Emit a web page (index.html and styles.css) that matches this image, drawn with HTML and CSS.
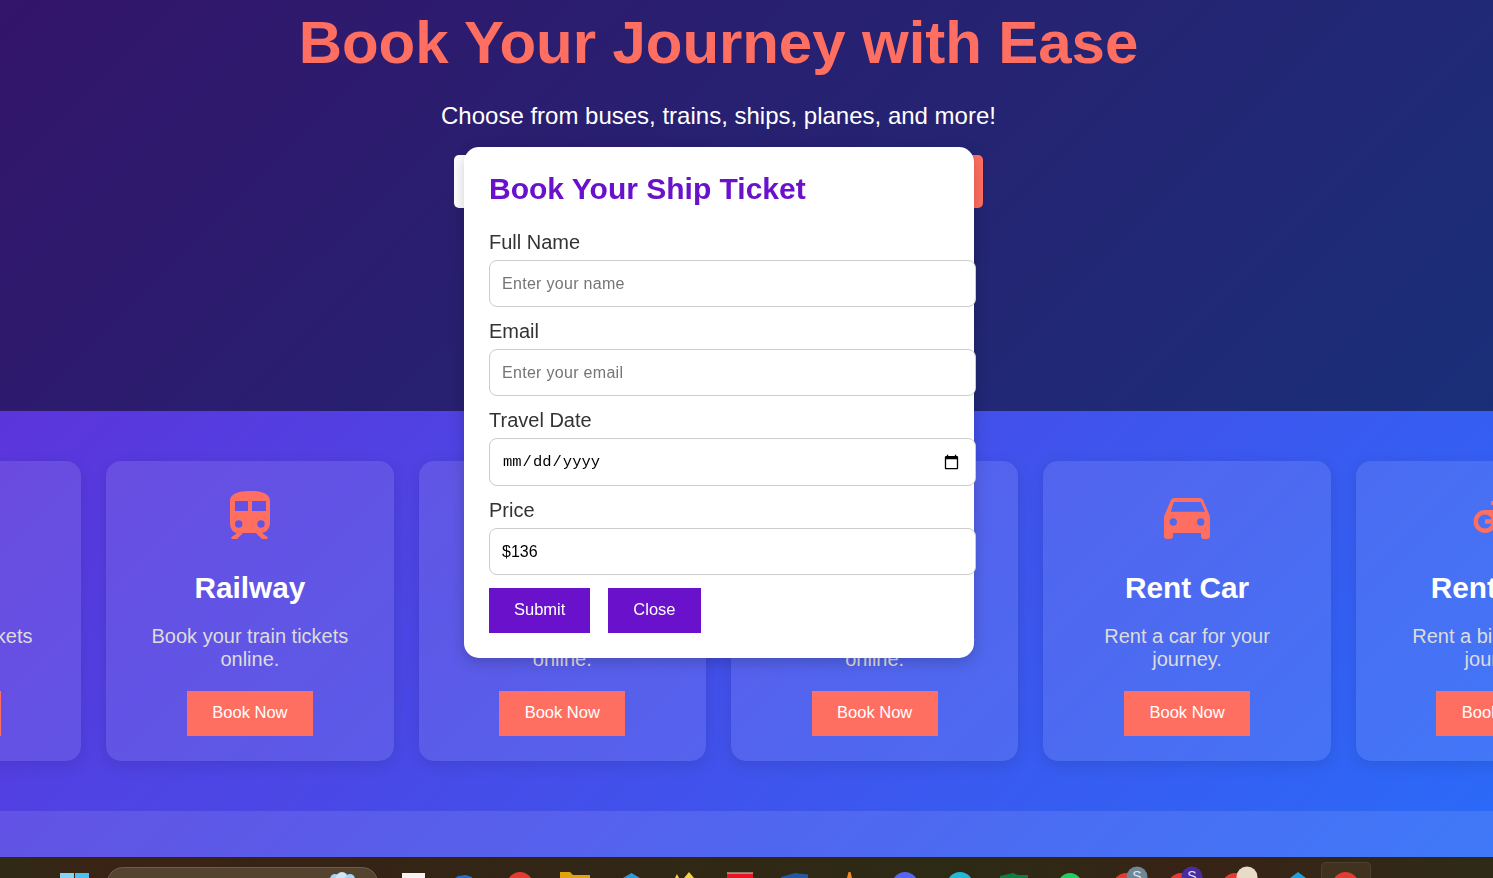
FILE: index.html
```html
<!DOCTYPE html>
<html lang="en">
<head>
<meta charset="utf-8">
<title>Book Your Journey with Ease</title>
<link rel="stylesheet" href="styles.css">
</head>
<body>
<div class="page">
  <section class="hero">
    <h1 class="hero-title">Book Your Journey with Ease</h1>
    <p class="hero-sub">Choose from buses, trains, ships, planes, and more!</p>
    <form class="search">
      <input class="search-input" type="text">
      <button class="search-btn" type="button">Search</button>
    </form>
  </section>
  <section class="services">
    <div class="track">
      <article class="card">
        <div class="card-icon"></div>
        <h3>Bus</h3>
        <p>Book your bus tickets online.</p>
        <button class="book" type="button">Book Now</button>
      </article>
      <article class="card">
        <div class="card-icon">
          <svg class="icon" width="40" height="48" viewBox="0 0 40 48"><path fill="#ff6f61" fill-rule="evenodd" d="M0 10C0 3 8 0 20 0s20 3 20 10v22c0 5-3 9-8 10l6 4.500-1 1.500h-5l-6-6H13l-6 6H2l-1-1.500 6-4.500c-5-1-7-5-7-10zM5 10v10h13V10zM22 10v10h14V10zM8.700 29.300a3.700 3.700 0 1 0 0 7.400 3.700 3.700 0 0 0 0-7.400zM31 29.300a3.700 3.700 0 1 0 0 7.400 3.700 3.700 0 0 0 0-7.400z"/></svg>
        </div>
        <h3>Railway</h3>
        <p>Book your train tickets online.</p>
        <button class="book" type="button">Book Now</button>
      </article>
      <article class="card">
        <div class="card-icon"></div>
        <h3>Ship</h3>
        <p>Book your ship tickets online.</p>
        <button class="book" type="button">Book Now</button>
      </article>
      <article class="card">
        <div class="card-icon"></div>
        <h3>Flight</h3>
        <p>Book your flight tickets online.</p>
        <button class="book" type="button">Book Now</button>
      </article>
      <article class="card">
        <div class="card-icon">
          <svg class="icon" width="46" height="41" viewBox="0 0 46 41"><path fill="#ff6f61" fill-rule="evenodd" d="M6.500 3C7 1 8.500 0 10.500 0h25c2 0 3.500 1 4 3L45 16c.5 1 1 2 1 4v18c0 2-1 3-3 3h-3c-2 0-3-1-3-3v-3H9v3c0 2-1 3-3 3H3c-2 0-3-1-3-3V20c0-2 .5-3 1-4zM10 4L6.700 13.700H41L36.700 4zM9.300 20.300a3.700 3.700 0 1 0 0 7.400 3.700 3.700 0 0 0 0-7.400zM36.700 20.300a3.700 3.700 0 1 0 0 7.400 3.700 3.700 0 0 0 0-7.400z"/></svg>
        </div>
        <h3>Rent Car</h3>
        <p>Rent a car for your journey.</p>
        <button class="book" type="button">Book Now</button>
      </article>
      <article class="card">
        <div class="card-icon">
          <svg class="icon" width="58" height="48" viewBox="0 0 58 48"><path fill="none" stroke="#ff6f61" stroke-width="4.500" d="M15 21.300a9.200 9.200 0 1 0 0 18.400 9.200 9.200 0 0 0 0-18.400zM15 30.500h20M15 21.300h22"/><path fill="#ff6f61" d="M21 10h8v4h-8z"/></svg>
        </div>
        <h3>Rent Bike</h3>
        <p>Rent a bike for your journey.</p>
        <button class="book" type="button">Book Now</button>
      </article>
    </div>
  </section>
  <footer class="footer"></footer>
</div>

<aside class="modal">
  <h2 class="modal-title">Book Your Ship Ticket</h2>
  <label class="field-label" for="name">Full Name</label>
  <input class="field" id="name" type="text" placeholder="Enter your name">
  <label class="field-label" for="email">Email</label>
  <input class="field" id="email" type="email" placeholder="Enter your email">
  <label class="field-label" for="date">Travel Date</label>
  <input class="field" id="date" type="date">
  <label class="field-label" for="price">Price</label>
  <input class="field" id="price" type="text" value="$136">
  <div class="modal-actions">
    <button class="modal-btn" type="button">Submit</button>
    <button class="modal-btn" type="button">Close</button>
  </div>
</aside>

<div class="taskbar">
  <svg class="taskbar-icons" width="1493" height="21" viewBox="0 0 1493 21">
    <rect x="60" y="16" width="14" height="5" fill="#7fd6f5"/><rect x="75" y="16" width="14" height="5" fill="#4cc2f1"/>
    <rect x="107.500" y="10.500" width="270" height="30" rx="15" fill="#54432f" stroke="#6d5d4a"/>
    <circle cx="335" cy="22" r="5" fill="#a9d4f5"/><circle cx="342" cy="21" r="6" fill="#cde6fa"/><circle cx="350" cy="22" r="5" fill="#a9d4f5"/>
    <rect x="402" y="16" width="23" height="5" fill="#f4f4f4"/>
    <path d="M455 21l3-2 8-1 6 2v1z" fill="#1f6fd0"/>
    <circle cx="520" cy="28" r="13" fill="#e23b30"/>
    <path d="M560 21v-6h10l3 3h17v3z" fill="#e0a30f"/>
    <path d="M631.500 16l8.500 5h-17z" fill="#2a9ae0"/>
    <path d="M689 15l5 6h-10zM675 21l2-4 2 4z" fill="#f5d33c"/>
    <rect x="727" y="16" width="26" height="5" fill="#e8141e"/><rect x="727" y="15.500" width="26" height="1" fill="#f2c9c9"/>
    <path d="M781 20l14-4 13 1.500v3.500h-27z" fill="#235a9e"/>
    <path d="M847 21l1.500-6h2l1.500 6z" fill="#f08a24"/>
    <circle cx="905" cy="28" r="13" fill="#5865f2"/>
    <circle cx="960" cy="28" r="13" fill="#24b8d8"/>
    <path d="M1000 21v-2l13-3 5 2h10v3z" fill="#137a41"/>
    <circle cx="1070" cy="28" r="12" fill="#1ed05e"/>
    <circle cx="1126" cy="29" r="13" fill="#e23b30"/><circle cx="1137" cy="20" r="10.500" fill="#6f8796"/><text class="badge-s" x="1137" y="24" fill="#dfe6ea">S</text>
    <circle cx="1181" cy="29" r="13" fill="#e23b30"/><circle cx="1192" cy="20" r="10.500" fill="#4a2ca0"/><text class="badge-s" x="1192" y="24" fill="#e4def5">S</text>
    <circle cx="1235" cy="29" r="13" fill="#e23b30"/><circle cx="1247" cy="20" r="10.500" fill="#e8dcc6"/>
    <path d="M1298 15l8 6h-16z" fill="#1d9fe0"/>
    <rect x="1321.500" y="5.500" width="49" height="30" rx="4" fill="#40321f" stroke="#4f4130"/>
    <circle cx="1345.500" cy="28" r="13" fill="#e23b30"/>
  </svg>
</div>
</body>
</html>
```

FILE: styles.css
```css
* {
  box-sizing: border-box;
}

html, body {
  height: 100%;
  margin: 0;
  overflow: hidden;
}

body {
  display: flex;
  flex-direction: column;
  font-family: "Liberation Sans", Arial, sans-serif;
  background: #2f2316;
}

.page {
  height: 857px;
  flex: none;
  display: flex;
  flex-direction: column;
  background: linear-gradient(135deg, #662ad6 0%, #2a6af8 100%);
}

.hero {
  height: 411px;
  flex: none;
  padding: 8px 56px 0 0;
  display: flex;
  flex-direction: column;
  align-items: center;
  background: rgba(0, 0, 0, 0.5);
}

.hero-title {
  margin: 0;
  font-size: 60px;
  line-height: 69px;
  font-weight: 700;
  letter-spacing: -0.07px;
  color: #ff6f61;
  white-space: nowrap;
}

.hero-sub {
  margin: 25px 0 0;
  font-size: 24px;
  line-height: 28px;
  color: #fff;
}

.search {
  display: flex;
  width: 529px;
  margin-top: 25px;
  height: 53px;
}

.search-input {
  flex: 1;
  border: 0;
  border-radius: 5px 0 0 5px;
  background: #fff;
}

.search-btn {
  width: 120px;
  border: 0;
  border-radius: 0 5px 5px 0;
  background: #ff6f61;
  color: #fff;
  font-size: 16px;
}

.services {
  height: 400px;
  flex: none;
  overflow: hidden;
  padding: 50px 0;
}

.track {
  display: flex;
  gap: 25px;
  margin-left: -206.200px;
}

.card {
  flex: 0 0 287.400px;
  height: 300px;
  padding: 30px 20px 0;
  display: flex;
  flex-direction: column;
  align-items: center;
  text-align: center;
  border-radius: 15px;
  background: rgba(255, 255, 255, 0.1);
  box-shadow: 0 4px 15px rgba(0, 0, 0, 0.1);
}

.card-icon {
  height: 48px;
  display: flex;
  align-items: flex-end;
  flex: none;
}

.icon {
  display: block;
}

.card h3 {
  margin: 32px 0 0;
  font-size: 29.800px;
  line-height: 34px;
  font-weight: 700;
  color: #fff;
  white-space: nowrap;
}

.card p {
  margin: 20px 0 0;
  font-size: 20px;
  line-height: 23px;
  color: #dcdcdc;
  max-width: 210px;
  height: 46px;
}

.book {
  margin-top: 20px;
  width: 126px;
  height: 45px;
  padding: 0 0 2px;
  border: 0;
  background: #ff6f61;
  color: #fff;
  font: 16.500px "Liberation Sans", Arial, sans-serif;
}

.footer {
  flex: 1;
  background: rgba(255, 255, 255, 0.1);
}

.modal {
  position: fixed;
  left: 464px;
  top: 147px;
  width: 510px;
  height: 511px;
  padding: 25px;
  background: #fff;
  border-radius: 15px;
  box-shadow: 0 4px 15px rgba(0, 0, 0, 0.2);
}

.modal-title {
  margin: 0 0 25px;
  font-size: 30px;
  line-height: 34px;
  font-weight: 700;
  color: #6a11cb;
}

.field-label {
  display: block;
  font-size: 20px;
  line-height: 23px;
  color: #333;
  margin-bottom: 6px;
}

.field {
  display: block;
  width: 487px;
  height: 47px;
  margin-bottom: 13px;
  padding: 0 12px;
  border: 1px solid #ccc;
  border-radius: 8px;
  background: #fff;
  color: #000;
  font: 16px "Liberation Sans", Arial, sans-serif;
}

.field::placeholder {
  color: #757575;
  letter-spacing: 0.3px;
}

.field[type="date"] {
  height: 48px;
  font: 15.500px "Liberation Mono", monospace;
}

.field::-webkit-calendar-picker-indicator {
  width: 17px;
  height: 17px;
  padding: 0;
  margin: 0 3px 0 0;
}

.modal-actions {
  display: flex;
  gap: 18px;
}

.modal-btn {
  height: 45px;
  padding: 0 25px 2px;
  border: 0;
  background: #6a11cb;
  color: #fff;
  font: 16.500px "Liberation Sans", Arial, sans-serif;
}

.taskbar {
  height: 21px;
  flex: none;
  overflow: hidden;
  background: linear-gradient(90deg, #2f2a15 0%, #3a2314 7%, #352416 25%, #2c2a14 65%, #382316 80%, #2f2a18 100%);
}

.taskbar-icons {
  display: block;
}

.badge-s {
  font: 14px "Liberation Sans", Arial, sans-serif;
  text-anchor: middle;
}
```
